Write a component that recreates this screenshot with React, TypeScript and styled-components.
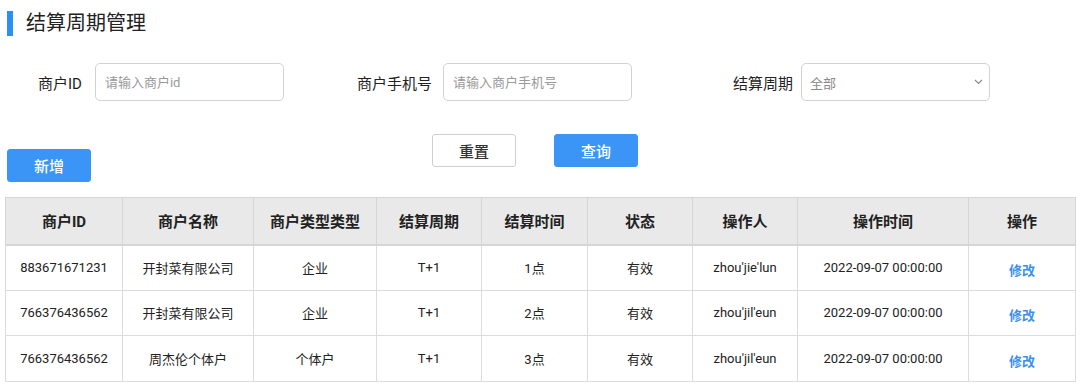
import React from "react";
import styled, { createGlobalStyle } from "styled-components";

const GlobalStyle = createGlobalStyle`
  html, body {
    margin: 0;
    padding: 0;
    background: #ffffff;
  }
  body {
    font-family: Roboto, "Noto Sans CJK SC", sans-serif;
    color: #222222;
  }
  * {
    box-sizing: border-box;
  }
`;

interface Row {
  id: string;
  name: string;
  type: string;
  cycle: string;
  time: string;
  status: string;
  operator: string;
  opTime: string;
}

const rows: Row[] = [
  {
    id: "883671671231",
    name: "开封菜有限公司",
    type: "企业",
    cycle: "T+1",
    time: "1点",
    status: "有效",
    operator: "zhou'jie'lun",
    opTime: "2022-09-07 00:00:00",
  },
  {
    id: "766376436562",
    name: "开封菜有限公司",
    type: "企业",
    cycle: "T+1",
    time: "2点",
    status: "有效",
    operator: "zhou'jil'eun",
    opTime: "2022-09-07 00:00:00",
  },
  {
    id: "766376436562",
    name: "周杰伦个体户",
    type: "个体户",
    cycle: "T+1",
    time: "3点",
    status: "有效",
    operator: "zhou'jil'eun",
    opTime: "2022-09-07 00:00:00",
  },
];

const columns = [
  { title: "商户ID", width: 117 },
  { title: "商户名称", width: 131 },
  { title: "商户类型类型", width: 123 },
  { title: "结算周期", width: 105 },
  { title: "结算时间", width: 106 },
  { title: "状态", width: 105 },
  { title: "操作人", width: 105 },
  { title: "操作时间", width: 171 },
  { title: "操作", width: 107 },
];

export default function App() {
  return (
    <>
      <GlobalStyle />
      <Page>
        <Title>结算周期管理</Title>

        <FormRow>
          <Field $offset={33}>
            <Label>商户ID</Label>
            <Input placeholder="请输入商户id" />
          </Field>
          <Field $offset={73} $gap={11}>
            <Label>商户手机号</Label>
            <Input placeholder="请输入商户手机号" />
          </Field>
          <Field $offset={101} $gap={8}>
            <Label>结算周期</Label>
            <SelectBox>
              <SelectText>全部</SelectText>
              <svg width="9" height="6" viewBox="0 0 9 6">
                <path
                  d="M1 1l3.5 3.5L8 1"
                  fill="none"
                  stroke="#8a8a8a"
                  strokeWidth="1.2"
                />
              </svg>
            </SelectBox>
          </Field>
        </FormRow>

        <ActionRow>
          <AddCell>
            <Button $primary>新增</Button>
          </AddCell>
          <SearchButtons>
            <Button>重置</Button>
            <Button $primary>查询</Button>
          </SearchButtons>
          <span />
        </ActionRow>

        <Table>
          <colgroup>
            {columns.map((c) => (
              <col key={c.title} style={{ width: c.width }} />
            ))}
          </colgroup>
          <thead>
            <tr>
              {columns.map((c) => (
                <Th key={c.title}>{c.title}</Th>
              ))}
            </tr>
          </thead>
          <tbody>
            {rows.map((r, i) => (
              <tr key={i}>
                <Td>{r.id}</Td>
                <Td>{r.name}</Td>
                <Td>{r.type}</Td>
                <Td>{r.cycle}</Td>
                <Td>{r.time}</Td>
                <Td>{r.status}</Td>
                <Td>{r.operator}</Td>
                <Td>{r.opTime}</Td>
                <Td>
                  <EditLink>修改</EditLink>
                </Td>
              </tr>
            ))}
          </tbody>
        </Table>
      </Page>
    </>
  );
}

const Page = styled.div`
  width: 1080px;
  padding: 11px 5px 0 5px;
`;

const Title = styled.h1`
  margin: 0;
  height: 25px;
  display: flex;
  align-items: center;
  gap: 13px;
  padding-left: 2px;
  font-size: 20px;
  font-weight: 400;
  color: #222222;
  line-height: 25px;

  &::before {
    content: "";
    width: 6px;
    height: 25px;
    background: #2b8ff5;
  }
`;

const FormRow = styled.div`
  display: flex;
  align-items: center;
  margin-top: 27px;
`;

const Field = styled.div<{ $offset: number; $gap?: number }>`
  display: flex;
  align-items: center;
  gap: ${(p) => p.$gap ?? 13}px;
  margin-left: ${(p) => p.$offset}px;
`;

const Label = styled.label`
  font-size: 15px;
  color: #222222;
  white-space: nowrap;
`;

const Input = styled.input`
  width: 189px;
  height: 38px;
  padding: 0 9px;
  border: 1px solid #d2d2d2;
  border-radius: 5px;
  font-family: Roboto, "Noto Sans CJK SC", sans-serif;
  font-size: 13px;
  color: #333333;
  outline: none;

  &::placeholder {
    color: #9a9a9a;
  }
`;

const SelectBox = styled.div`
  width: 189px;
  height: 38px;
  padding: 0 6px 0 8px;
  border: 1px solid #d2d2d2;
  border-radius: 5px;
  display: flex;
  align-items: center;
  justify-content: space-between;
`;

const SelectText = styled.span`
  font-size: 13px;
  color: #8a8a8a;
`;

const ActionRow = styled.div`
  display: grid;
  grid-template-columns: 1fr auto 1fr;
  align-items: start;
  margin-top: 33px;
`;

const AddCell = styled.div`
  padding-top: 15px;
  padding-left: 2px;
`;

const SearchButtons = styled.div`
  display: flex;
  gap: 38px;
  margin-left: -10px;
`;

const Button = styled.button<{ $primary?: boolean }>`
  width: 84px;
  height: 33px;
  border-radius: 3px;
  border: 1px solid ${(p) => (p.$primary ? "#3a95f6" : "#cfcfcf")};
  background: ${(p) => (p.$primary ? "#3a95f6" : "#ffffff")};
  color: ${(p) => (p.$primary ? "#ffffff" : "#333333")};
  font-family: Roboto, "Noto Sans CJK SC", sans-serif;
  font-size: 15px;
  font-weight: 500;
  cursor: pointer;
`;

const Table = styled.table`
  margin-top: 15px;
  width: 1070px;
  border-collapse: collapse;
  table-layout: fixed;
  border: 1px solid #d9d9d9;
`;

const Th = styled.th`
  height: 47px;
  background: #e9e9e9;
  border: 1px solid #d6d6d6;
  border-bottom-width: 2px;
  font-size: 15px;
  font-weight: 700;
  color: #222222;
  text-align: center;
`;

const Td = styled.td`
  height: 45.5px;
  border: 1px solid #dcdcdc;
  font-size: 13px;
  color: #222222;
  text-align: center;
  white-space: nowrap;
`;

const EditLink = styled.a`
  display: inline-block;
  padding-top: 4px;
  font-size: 13px;
  font-weight: 700;
  color: #3a8ff0;
  cursor: pointer;
`;
